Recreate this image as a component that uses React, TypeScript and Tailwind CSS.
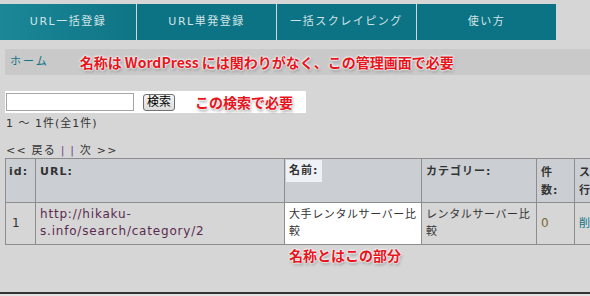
import React from 'react';

const tabs = ['URL一括登録', 'URL単発登録', '一括スクレイピング', '使い方'];

const jp = "font-['DejaVu_Sans','Noto_Sans_CJK_JP',sans-serif]";
const note =
  "font-['Noto_Sans_CJK_JP',sans-serif] font-bold text-[#e8141c] [text-shadow:0_0_2px_#fff,0_0_2px_#fff,0_0_3px_#fff,1px_2px_3px_#888]";

const App: React.FC = () => {
  return (
    <div className={`w-[590px] h-[296px] overflow-hidden bg-[#d6d6d6] ${jp} text-[#333]`}>
      {/* nav */}
      <div className="pt-1 flex">
        {tabs.map((t, i) => (
          <div
            key={t}
            className={`h-9 flex items-center justify-center text-[11px] tracking-[1.5px] text-[#d2e4e7] border-r border-[#d6d6d6] ${
              i === 0 ? 'w-[137px] bg-gradient-to-r from-[#1b8797] to-[#0e7585]' : 'w-[140px] bg-[#0c7384]'
            }`}
          >
            {t}
          </div>
        ))}
      </div>

      {/* breadcrumb */}
      <div className="mt-[9px] ml-[5px] h-[26px] bg-[#c9c9c9] flex items-center">
        <span className="ml-[5px] text-[11px] tracking-[2px] text-[#0e7585]">ホーム</span>
        <span className={`ml-[31px] text-[14px] ${note}`}>名称は WordPress には関わりがなく、この管理画面で必要</span>
      </div>

      {/* search */}
      <div className="mt-4 ml-[5px] w-[301px] h-[22px] bg-white flex items-center">
        <input className="ml-[1px] w-[128px] h-[18px] bg-white border border-[#a5a5a5]" />
        <button className="ml-[9px] h-[17px] px-[3px] text-[12px] leading-none border border-[#707070] rounded-[3px] bg-gradient-to-b from-[#f4f4f4] to-[#dcdcdc] text-black">
          検索
        </button>
        <span className={`ml-[20px] text-[14px] ${note}`}>この検索で必要</span>
      </div>
      <div className="mt-[3px] ml-[6px] text-[11px] tracking-[1px] text-[#333]">1 〜 1件(全1件)</div>
      <div className="mt-[11px] ml-[6px] text-[11px] tracking-[1.2px] text-[#333] leading-[14px]">
        &lt;&lt; 戻る <span className="text-[#6a4a8a]">|</span> <span className="text-[#6a4a8a]">|</span> 次 &gt;&gt;
      </div>

      {/* table */}
      <div className="ml-[5px] w-[620px] h-[134px]">
        <table className="border-collapse text-[11px] tracking-[1px] table-fixed">
          <thead>
            <tr className="bg-[#cbcfd3] h-[44px] align-top text-left font-bold">
              <th className="w-[30px] border border-[#8d8d8d] pl-[3px] pt-[5px]">id:</th>
              <th className="w-[249px] border border-[#8d8d8d] pl-[4px] pt-[5px]">URL:</th>
              <th className="w-[137px] border border-[#8d8d8d] pl-[1px] pt-[1px]">
                <span className="inline-block bg-[#eef2f6] pl-[3px] pr-[4px] py-[3px]">名前:</span>
              </th>
              <th className="w-[115px] border border-[#8d8d8d] pl-[4px] pt-[5px]">カテゴリー:</th>
              <th className="w-[38px] border border-[#8d8d8d] pl-[4px] pt-[5px] leading-[18px]">
                件<br />数:
              </th>
              <th className="w-[40px] border border-[#8d8d8d] pl-[4px] pt-[5px] leading-[18px]">
                ス<br />行
              </th>
            </tr>
          </thead>
          <tbody>
            <tr className="h-[42px] leading-[17px]">
              <td className="border border-[#8d8d8d] pl-[6px] text-[12px]">1</td>
              <td className="border border-[#8d8d8d] pl-[4px] text-[12px] tracking-[0.8px] text-[#5b2b4f]">
                http://hikaku-
                <br />
                s.info/search/category/2
              </td>
              <td className="border border-[#8d8d8d] bg-white pl-[4px] pr-[2px] tracking-[0.6px]">
                大手レンタルサーバー比
                <br />較
              </td>
              <td className="border border-[#8d8d8d] pl-[4px] pr-[2px] tracking-[0.6px]">
                レンタルサーバー比
                <br />較
              </td>
              <td className="border border-[#8d8d8d] pl-[4px] text-[12px] text-[#7a6830]">0</td>
              <td className="border border-[#8d8d8d] pl-[4px] text-[#0e7585]">削</td>
            </tr>
          </tbody>
        </table>
        <div className={`ml-[284px] text-[14px] ${note}`}>名称とはこの部分</div>
      </div>

      <div className="h-[2px] bg-[#333]" />
      <div className="h-[10px] bg-[#e2e2e2]" />
    </div>
  );
};

export default App;
